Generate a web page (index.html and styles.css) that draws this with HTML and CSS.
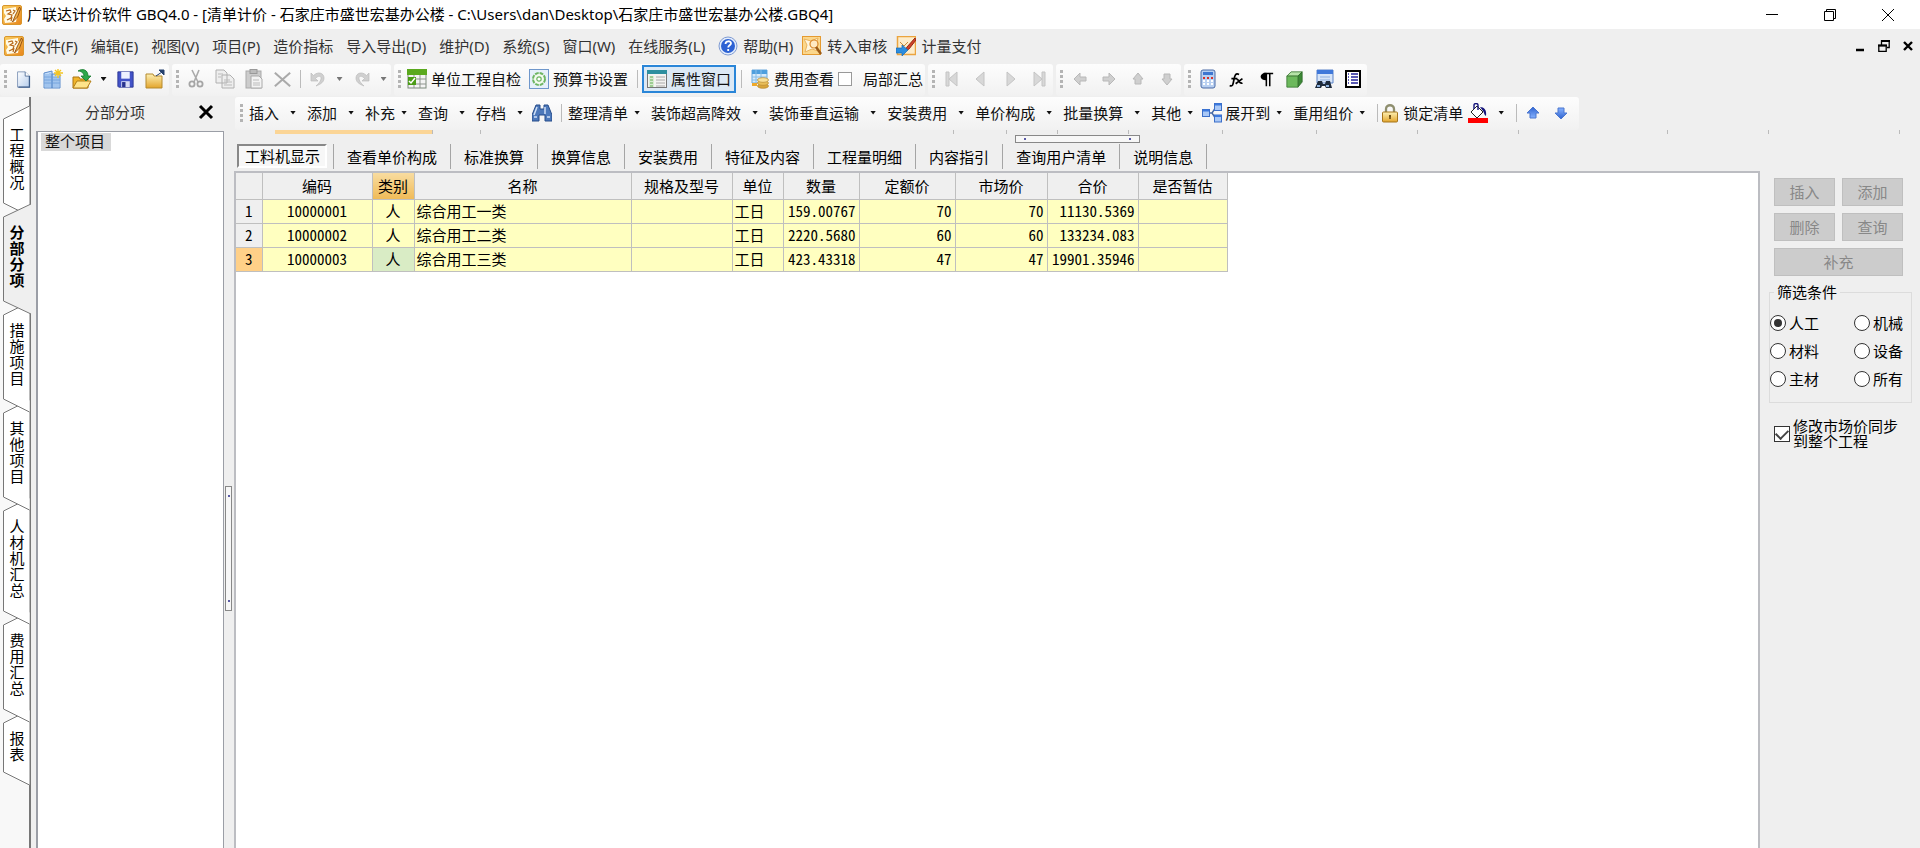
FILE: index.html
```html
<!DOCTYPE html>
<html lang="zh-CN">
<head>
<meta charset="utf-8">
<title>广联达计价软件 GBQ4.0</title>
<link rel="stylesheet" href="styles.css">
</head>
<body>
<svg class="defs" aria-hidden="true">
  <defs>
    <linearGradient id="g-gold" x1="0" y1="0" x2="0" y2="1"><stop offset="0" stop-color="#fdf0b4"/><stop offset="1" stop-color="#e3a52c"/></linearGradient>
    <linearGradient id="g-blue" x1="0" y1="0" x2="0" y2="1"><stop offset="0" stop-color="#2e62cf"/><stop offset="1" stop-color="#86b2ff"/></linearGradient>
    <linearGradient id="g-sky" x1="0" y1="0" x2="1" y2="1"><stop offset="0" stop-color="#fff"/><stop offset="1" stop-color="#b5cdec"/></linearGradient>
    <linearGradient id="g-logo" x1="0" y1="0" x2="1" y2="1"><stop offset="0" stop-color="#fbd060"/><stop offset="1" stop-color="#e8861c"/></linearGradient>
    <symbol id="i-logo" viewBox="0 0 20 20"><rect x=".5" y=".5" width="19" height="19" rx="1.500" fill="url(#g-logo)" stroke="#d9962c"/><path d="M2 4l12-2v3l2 1-2 11-11 1-1-4 2-3-2-3z" fill="#fffbe8"/><path d="M4 6l4-1 1 2-3 2 4 1-1 3-4 2M11 5l2 1-2 3M10 12l-1 4" fill="none" stroke="#b8681a" stroke-width="1.200"/><path d="M17.500 2l-4 8-3 7 5-5 3-8z" fill="#f3b24a" stroke="#8c4a10" stroke-width=".9"/></symbol>
    <symbol id="i-new" viewBox="0 0 20 20"><path d="M3 1h9l5 5v13H3z" fill="url(#g-sky)" stroke="#7a90b4"/><path d="M17 6v13H4" fill="none" stroke="#3f5f8c" stroke-width="1.500"/><path d="M12 1v5h5" fill="#fff" stroke="#4c6a94"/></symbol>
    <symbol id="i-building" viewBox="0 0 20 20"><path d="M1 4l8-2v17H1zM9 5h8v14H9z" fill="#c5defa" stroke="#5b8ccc"/><path d="M3 5v13M5 5v13M7 4v14M11 8v10M13 8v10M15 8v10M1 8h16M1 11h16M1 14h16" stroke="#6d9edb" stroke-width=".8"/><path d="M15 0v9M11 4h9M12 1l6 6M18 1l-6 6" stroke="#f4c624" stroke-width="1.400"/></symbol>
    <symbol id="i-open" viewBox="0 0 20 20"><path d="M1 8h6l1 2h8v9H1z" fill="#f0b429" stroke="#a97514"/><path d="M1 19l4-7h14l-4 7z" fill="#ffe48b" stroke="#b37f16"/><path d="M6 2c5-3 10-1 10 5h3l-5 5-5-5h3c0-3-3-5-6-5z" fill="#2fa84a" stroke="#177a2d" stroke-width=".8"/></symbol>
    <symbol id="i-save" viewBox="0 0 20 20"><path d="M1 1h18v18H2l-1-1z" fill="#4353c8" stroke="#27328f"/><path d="M5 1h10v8H5z" fill="#eef1ff"/><path d="M5 12h10v7H5z" fill="#d8dcf5"/><path d="M6 13h4v6H6z" fill="#27328f"/></symbol>
    <symbol id="i-folder" viewBox="0 0 20 20"><path d="M1 5h7l1 2h8v12H1z" fill="url(#g-gold)" stroke="#b58a2e"/><path d="M11 7l6-4M14 1h5v5z" fill="#24406e" stroke="#24406e"/></symbol>
    <symbol id="i-cut" viewBox="0 0 20 20"><path d="M6 1l6 12M13 1L8 13" stroke="#aaa" stroke-width="1.600"/><circle cx="6" cy="15" r="2.600" fill="none" stroke="#a5a5a5" stroke-width="1.800"/><circle cx="14" cy="15" r="2.600" fill="none" stroke="#a5a5a5" stroke-width="1.800"/></symbol>
    <symbol id="i-copy" viewBox="0 0 20 20"><path d="M1 1h8l3 3v10H1zM7 6h8l4 4v9H7z" fill="#eee" stroke="#b0b0b0"/><path d="M3 5h5M3 8h3M9 11h6M9 13h8M9 16h8" stroke="#bbb"/></symbol>
    <symbol id="i-paste" viewBox="0 0 20 20"><rect x="2" y="2" width="15" height="17" fill="#ccc" stroke="#aaa"/><rect x="6" y=".5" width="7" height="4" fill="#bbb" stroke="#999"/><path d="M7 7h8l3 3v9H7z" fill="#f3f3f3" stroke="#aaa"/><path d="M9 11h6M9 14h7M9 16h7" stroke="#bbb"/></symbol>
    <symbol id="i-x" viewBox="0 0 20 20"><path d="M1 2l18 16M19 2L1 18" stroke="#aaa" stroke-width="2.400"/></symbol>
    <symbol id="i-undo" viewBox="0 0 20 20"><path d="M3 4v8h7L7.500 9.500C10 6 14 7 13 10c-.5 3-3 5-5 7 5-2 8-4 8-8 0-5-6-7-10.500-2.500z" fill="#d0d0d0" stroke="#bbb" stroke-width=".7"/></symbol>
    <symbol id="i-check" viewBox="0 0 20 20"><rect x="1" y="1" width="18" height="18" fill="#f4f4f4" stroke="#7d8a7d"/><path d="M0 0h20v6H0z" fill="#5ba91f"/><path d="M1 10h18M1 15h18M7 6v13M13 6v13" stroke="#8e948e"/><rect x="1" y="8" width="8" height="8" fill="#4b9d16"/><path d="M2 12l2 2 4-5" fill="none" stroke="#fff" stroke-width="1.500"/></symbol>
    <symbol id="i-gear" viewBox="0 0 20 20"><rect x=".5" y=".5" width="19" height="19" fill="#e6f0fa" stroke="#6f97cb"/><circle cx="10" cy="10" r="6" fill="#f3fbef" stroke="#6db562" stroke-width="2" stroke-dasharray="3.700 1"/><circle cx="10" cy="10" r="2.200" fill="#fff" stroke="#6db562" stroke-width="1.200"/></symbol>
    <symbol id="i-prop" viewBox="0 0 20 20"><rect x=".5" y="1.500" width="19" height="17" fill="#f3f3f1" stroke="#777"/><path d="M0 1h20v4H0z" fill="#2d8f9f"/><path d="M2 7h5v11H2z" fill="#d9ecd3"/><path d="M3 8h3M3 11h3M3 14h3M3 17h3" stroke="#63ad53"/><path d="M9 8h9M9 11h9M9 14h9M9 17h9" stroke="#aaa"/></symbol>
    <symbol id="i-fee" viewBox="0 0 20 20"><path d="M2 1h15v13H2z" fill="#d7ebfb" stroke="#6aa9dc"/><path d="M2 1h15v4H2z" fill="#4e9fde"/><path d="M2 8h15M2 11h15M6 1v13M11 1v13" stroke="#86bce6"/><path d="M2 14h5v3H2z" fill="#eea92c"/><g stroke="#b98a30" stroke-width=".7"><ellipse cx="13" cy="17" rx="5.500" ry="2.300" fill="#d9a53a"/><ellipse cx="13" cy="14" rx="5.500" ry="2.300" fill="#e9be58"/><ellipse cx="13" cy="11" rx="5.500" ry="2.300" fill="#f9e098"/></g></symbol>
    <symbol id="i-first" viewBox="0 0 20 20"><path d="M4 3h3v14H4zM15 3v14L7 10z" fill="#d8d8d8" stroke="#c4c4c4"/></symbol>
    <symbol id="i-prev" viewBox="0 0 20 20"><path d="M13 3v14l-8-7z" fill="#d8d8d8" stroke="#c4c4c4"/></symbol>
    <symbol id="i-left" viewBox="0 0 20 20"><path d="M4 10l6-6v4h6v4h-6v4z" fill="#cfcfcf" stroke="#b8b8b8"/></symbol>
    <symbol id="i-up" viewBox="0 0 20 20"><path d="M10 4l5 6h-2v5H7v-5H5z" fill="#cfcfcf" stroke="#b8b8b8"/></symbol>
    <symbol id="i-calc" viewBox="0 0 20 20"><rect x="3" y="1" width="14" height="18" rx="2" fill="#b9d0f1" stroke="#4a6ba6"/><path d="M5 3h10v3H5z" fill="#3f76d0"/><path d="M5 9h2M9 9h2M13 9h2" stroke="#d8302a" stroke-width="2"/><path d="M5 12h2M9 12h2M13 12h2M5 15h2M9 15h2M13 15h2" stroke="#fff" stroke-width="2"/></symbol>
    <symbol id="i-fx" viewBox="0 0 20 20"><path d="M2 17c4 2 4-2 5-7s2-8 6-6M4 9h7M10 10c3-1 3 6 7 4M17 9l-8 6" fill="none" stroke="#000" stroke-width="2"/></symbol>
    <symbol id="i-para" viewBox="0 0 20 20"><path d="M8 3h11M11 3v15M15 3v15" stroke="#000" stroke-width="1.800"/><path d="M11 2C2 2 2 11 11 11z"/></symbol>
    <symbol id="i-cube" viewBox="0 0 20 20"><path d="M1 6l5-5h13l-5 5z" fill="#b6e3a8" stroke="#3b7a34"/><path d="M14 6l5-5v12l-5 6z" fill="#3c8936" stroke="#2f6a2a"/><path d="M1 6h13v13H1z" fill="#6cb95c" stroke="#3b7a34"/></symbol>
    <symbol id="i-find" viewBox="0 0 20 20"><path d="M3 1h16v13H3z" fill="#d6e4f8" stroke="#5a83c8"/><path d="M3 1h16v4H3z" fill="#3f78da"/><path d="M6 8h10M6 11h10" stroke="#8fafdf"/><path d="M1 19l3-7h4l1 3h2l1-3h4l2 7h-6l-1-2h-3l-1 2z" fill="#1d2a3c"/><path d="M3 17h3M12 17h3" stroke="#8fb3e0" stroke-width="2"/></symbol>
    <symbol id="i-list" viewBox="0 0 20 20"><rect x="3" y="2" width="14" height="16" fill="#fff" stroke="#000" stroke-width="2"/><path d="M5 5h1M5 8h1M5 11h1M5 14h1M8 5h7M8 8h7M8 11h7M8 14h7" stroke="#23239a" stroke-width="1.600"/></symbol>
    <symbol id="i-bino" viewBox="0 0 20 20"><path d="M4 2h4v4h4V2h4l4 10v6h-7v-6H7v6H0v-6z" fill="#4d79bb" stroke="#274d8a"/><path d="M5 4l-3 8M13 4v7M2 14h3M15 14h3" stroke="#cfe0f7" stroke-width="1.500"/></symbol>
    <symbol id="i-tree" viewBox="0 0 20 20"><path d="M6 10h4l4-6M10 10l4 6" fill="none" stroke="#4769a5" stroke-width="1.400"/><g fill="#a9c8f6" stroke="#3b6fc9"><rect x=".5" y="6.500" width="7" height="7"/><rect x="12.500" y=".5" width="7" height="7"/><rect x="12.500" y="12" width="7" height="7"/></g><path d="M1 7.500h6M13 1.500h6M13 13h6" stroke="#3b78de" stroke-width="2"/></symbol>
    <symbol id="i-lock" viewBox="0 0 20 20"><path d="M6 10V6c0-5 8-5 8 0v4" fill="none" stroke="#8f8f6f" stroke-width="2.300"/><rect x="2.500" y="9" width="15" height="10" rx="1" fill="url(#g-gold)" stroke="#a5741b"/><path d="M10 12v4M9 13h2" stroke="#6b4a10" stroke-width="1.600"/></symbol>
    <symbol id="i-fill" viewBox="0 0 20 20"><path d="M0 15h20v5H0z" fill="#f00"/><path d="M3 9l6-6 6 6-6 6z" fill="#fff" stroke="#222"/><path d="M6 6V2c0-2 4-2 4 0v5" fill="none" stroke="#16167c" stroke-width="1.400"/><path d="M12 4c4 0 7 3 6 9-2-1-2-4-3-5z" fill="#16167c"/></symbol>
    <symbol id="i-bup" viewBox="0 0 20 20"><path d="M10 4l6 6h-3v5H7v-5H4z" fill="url(#g-blue)" stroke="#4a76cf"/></symbol>
    <symbol id="i-help" viewBox="0 0 20 20"><circle cx="10" cy="10" r="9" fill="#e4edfb" stroke="#7f9bd3"/><circle cx="10" cy="10" r="7" fill="#2d62d4"/><path d="M7.500 8c0-3.500 5.500-3.500 5.500-.8 0 2-2.800 2-2.800 4.300M10.200 13v2" fill="none" stroke="#fff" stroke-width="1.800"/></symbol>
    <symbol id="i-audit" viewBox="0 0 20 20"><rect x=".5" y=".5" width="18" height="18" fill="#fbd78c" stroke="#e59a2f"/><path d="M2 3l7 2 7-3-2 7 2 6-6-2-7 3 2-7z" fill="#fff6de" stroke="#eab35e"/><circle cx="12" cy="8" r="4" fill="#ffe9c2" stroke="#d98728" stroke-width="1.200"/><path d="M14 11l5 7" stroke="#9c5b16" stroke-width="2.500"/></symbol>
    <symbol id="i-pay" viewBox="0 0 20 20"><rect x="1.500" y=".5" width="18" height="18" fill="#fdeccb" stroke="#eba43f" stroke-width="1.500"/><path d="M4 6l4 4 4-4" fill="none" stroke="#c98b3a"/><path d="M19 2l-8 9-2 4 4-2 7-9z" fill="#d0432b" stroke="#962713"/><path d="M0 12h6V9l6 5-6 6v-3H0z" fill="#2b8de0" stroke="#176ab2" stroke-width=".7"/></symbol>
  </defs>
</svg>

<header class="titlebar">
  <svg class="icon"><use href="#i-logo"/></svg>
  <h1 class="title">广联达计价软件 GBQ4.0 - [清单计价 - 石家庄市盛世宏基办公楼 - C:\Users\dan\Desktop\石家庄市盛世宏基办公楼.GBQ4]</h1>
  <div class="winbtns">
    <button class="winbtn" aria-label="最小化"><svg width="12" height="12"><path d="M0 5.500h12" stroke="#000"/></svg></button>
    <button class="winbtn" aria-label="还原"><svg width="12" height="12"><path d="M.5 2.500h9v9h-9zM2.500 2V.500h9v9H10" fill="none" stroke="#000"/></svg></button>
    <button class="winbtn" aria-label="关闭"><svg width="12" height="12"><path d="M0 0l12 12M12 0L0 12" stroke="#000"/></svg></button>
  </div>
</header>

<nav class="menubar">
  <svg class="icon"><use href="#i-logo"/></svg>
  <div class="menus">
    <button class="menu">文件(F)</button><button class="menu">编辑(E)</button><button class="menu">视图(V)</button><button class="menu">项目(P)</button><button class="menu">造价指标</button><button class="menu">导入导出(D)</button><button class="menu">维护(D)</button><button class="menu">系统(S)</button><button class="menu">窗口(W)</button><button class="menu">在线服务(L)</button>
    <div class="menus-icon">
      <button class="menu"><svg class="icon"><use href="#i-help"/></svg>帮助(H)</button><button class="menu"><svg class="icon"><use href="#i-audit"/></svg>转入审核</button><button class="menu"><svg class="icon"><use href="#i-pay"/></svg>计量支付</button>
    </div>
  </div>
  <div class="mdibtns">
    <button class="mdibtn" aria-label="最小化文档"><svg width="12" height="12"><path d="M2 10h8" stroke="#000" stroke-width="2.500"/></svg></button>
    <button class="mdibtn" aria-label="还原文档"><svg width="12" height="12"><path d="M.8 5.500h7.400v6H.8zM3.500 5V1h7.700v6.500H9" fill="none" stroke="#000" stroke-width="1.300"/><path d="M0 5.500h9M3 1h9" stroke="#000" stroke-width="2"/></svg></button>
    <button class="mdibtn" aria-label="关闭文档"><svg width="12" height="12"><path d="M2 2l8 8M10 2l-8 8" stroke="#000" stroke-width="2.400"/></svg></button>
  </div>
</nav>

<div class="toolrow">
  <div class="toolbar">
    <i class="grip"></i>
    <button class="tool" aria-label="新建"><svg class="icon small"><use href="#i-new"/></svg></button>
    <button class="tool" aria-label="新建工程"><svg class="icon"><use href="#i-building"/></svg></button>
    <button class="tool" aria-label="打开"><svg class="icon"><use href="#i-open"/></svg></button>
    <button class="drop" aria-label="打开选项"><i class="caret"></i></button>
    <button class="tool" aria-label="保存"><svg class="icon small"><use href="#i-save"/></svg></button>
    <button class="tool" aria-label="文件夹"><svg class="icon"><use href="#i-folder"/></svg></button>
  </div>
  <div class="toolbar">
    <i class="grip"></i>
    <button class="tool" aria-label="剪切" disabled><svg class="icon"><use href="#i-cut"/></svg></button>
    <button class="tool" aria-label="复制" disabled><svg class="icon"><use href="#i-copy"/></svg></button>
    <button class="tool" aria-label="粘贴" disabled><svg class="icon"><use href="#i-paste"/></svg></button>
    <button class="tool" aria-label="删除" disabled><svg class="icon small"><use href="#i-x"/></svg></button>
    <i class="sep"></i>
    <button class="tool" aria-label="撤销" disabled><svg class="icon"><use href="#i-undo"/></svg></button>
    <button class="drop" aria-label="撤销列表" disabled><i class="caret grey"></i></button>
    <button class="tool" aria-label="重做" disabled><svg class="icon flip"><use href="#i-undo"/></svg></button>
    <button class="drop" aria-label="重做列表" disabled><i class="caret grey"></i></button>
  </div>
  <div class="toolbar">
    <i class="grip"></i>
    <button class="tool text"><svg class="icon"><use href="#i-check"/></svg>单位工程自检</button>
    <button class="tool text"><svg class="icon"><use href="#i-gear"/></svg>预算书设置</button>
    <i class="sep wide"></i>
    <button class="tool text on"><svg class="icon"><use href="#i-prop"/></svg>属性窗口</button>
    <i class="sep wide"></i>
    <button class="tool text"><svg class="icon"><use href="#i-fee"/></svg>费用查看</button>
    <label class="toolcheck"><input type="checkbox" class="box">局部汇总</label>
  </div>
  <div class="toolbar">
    <i class="grip"></i>
    <button class="tool" aria-label="首条" disabled><svg class="icon"><use href="#i-first"/></svg></button>
    <button class="tool" aria-label="上一条" disabled><svg class="icon"><use href="#i-prev"/></svg></button>
    <button class="tool" aria-label="下一条" disabled><svg class="icon flip"><use href="#i-prev"/></svg></button>
    <button class="tool" aria-label="末条" disabled><svg class="icon flip"><use href="#i-first"/></svg></button>
  </div>
  <div class="toolbar">
    <i class="grip"></i>
    <button class="tool" aria-label="升级" disabled><svg class="icon"><use href="#i-left"/></svg></button>
    <button class="tool" aria-label="降级" disabled><svg class="icon flip"><use href="#i-left"/></svg></button>
    <button class="tool" aria-label="上移" disabled><svg class="icon"><use href="#i-up"/></svg></button>
    <button class="tool" aria-label="下移" disabled><svg class="icon flop"><use href="#i-up"/></svg></button>
  </div>
  <div class="toolbar">
    <i class="grip"></i>
    <button class="tool" aria-label="计算器"><svg class="icon"><use href="#i-calc"/></svg></button>
    <button class="tool" aria-label="函数"><svg class="icon small"><use href="#i-fx"/></svg></button>
    <button class="tool" aria-label="特殊符号"><svg class="icon small"><use href="#i-para"/></svg></button>
    <button class="tool" aria-label="图形"><svg class="icon small"><use href="#i-cube"/></svg></button>
    <button class="tool" aria-label="查找"><svg class="icon"><use href="#i-find"/></svg></button>
    <button class="tool" aria-label="列表"><svg class="icon"><use href="#i-list"/></svg></button>
  </div>
</div>

<main class="main">
  <nav class="sidetabs">
    <button class="sidetab"><svg class="outline"><path d="M29.500-6L3.500 7V91L29.500 104"/></svg><span>工程概况</span></button>
    <button class="sidetab active"><svg class="outline"><path d="M31-6L3.500 7V91L31 104"/></svg><span>分部分项</span></button>
    <button class="sidetab"><svg class="outline"><path d="M29.500-6L3.500 7V91L29.500 104"/></svg><span>措施项目</span></button>
    <button class="sidetab"><svg class="outline"><path d="M29.500-6L3.500 7V91L29.500 104"/></svg><span>其他项目</span></button>
    <button class="sidetab"><svg class="outline"><path d="M29.500-6L3.500 7V107L29.500 120"/></svg><span>人材机汇总</span></button>
    <button class="sidetab"><svg class="outline"><path d="M29.500-6L3.500 7V91L29.500 104"/></svg><span>费用汇总</span></button>
    <button class="sidetab"><svg class="outline"><path d="M29.500-6L3.500 7V56L29.500 69"/></svg><span>报表</span></button>
  </nav>

  <aside class="project">
    <div class="project-head">
      <h2 class="project-title">分部分项</h2>
      <button class="project-close" aria-label="关闭面板"><svg width="16" height="16"><path d="M2 2l12 12M14 2L2 14" stroke="#000" stroke-width="3"/></svg></button>
    </div>
    <ul class="tree"><li class="node">整个项目</li></ul>
  </aside>

  <div class="vsplit"><i class="vhandle"></i></div>

  <section class="work">
    <div class="toolbar sub">
      <i class="grip"></i>
      <button class="cmd loose">插入<i class="caret"></i></button><button class="cmd loose">添加<i class="caret"></i></button><button class="cmd">补充<i class="caret"></i></button><button class="cmd loose">查询<i class="caret"></i></button><button class="cmd loose">存档<i class="caret"></i></button>
      <button class="cmd pic" aria-label="查找"><svg class="icon"><use href="#i-bino"/></svg></button>
      <i class="sep"></i>
      <button class="cmd">整理清单<i class="caret"></i></button><button class="cmd loose">装饰超高降效<i class="caret"></i></button><button class="cmd loose">装饰垂直运输<i class="caret"></i></button><button class="cmd loose">安装费用<i class="caret"></i></button><button class="cmd loose">单价构成<i class="caret"></i></button><button class="cmd loose">批量换算<i class="caret"></i></button><button class="cmd">其他<i class="caret"></i></button>
      <button class="cmd pic"><svg class="icon"><use href="#i-tree"/></svg>展开到<i class="caret"></i></button><button class="cmd">重用组价<i class="caret"></i></button>
      <i class="sep"></i>
      <button class="cmd pic"><svg class="icon"><use href="#i-lock"/></svg>锁定清单</button>
      <button class="cmd" aria-label="填充颜色"><svg class="icon"><use href="#i-fill"/></svg><i class="caret"></i></button>
      <i class="sep"></i>
      <button class="tool" aria-label="上移"><svg class="icon"><use href="#i-bup"/></svg></button>
      <button class="tool" aria-label="下移"><svg class="icon flop"><use href="#i-bup"/></svg></button>
    </div>

    <div class="colstrip">
      <i class="hot" style="width:158px"></i><i style="width:48px"></i><i style="width:285px"></i><i style="width:188px"></i><i style="width:53px"></i><i style="width:51px"></i><i style="width:71px"></i><i style="width:94px"></i><i style="width:94px"></i><i style="width:101px"></i><i style="width:101px"></i><i style="width:149px"></i><i style="width:101px"></i><i style="width:131px"></i>
    </div>
    <div class="hsplit"><i class="hhandle"></i></div>

    <nav class="tabs">
      <button class="tab active">工料机显示</button><button class="tab">查看单价构成</button><button class="tab">标准换算</button><button class="tab">换算信息</button><button class="tab">安装费用</button><button class="tab">特征及内容</button><button class="tab">工程量明细</button><button class="tab">内容指引</button><button class="tab">查询用户清单</button><button class="tab">说明信息</button>
    </nav>

    <div class="content">
      <div class="gridpane">
        <table class="grid">
          <colgroup><col class="c-row"><col class="c-code"><col class="c-kind"><col class="c-name"><col class="c-spec"><col class="c-unit"><col class="c-qty"><col class="c-quota"><col class="c-market"><col class="c-total"><col class="c-est"></colgroup>
          <thead><tr><th></th><th>编码</th><th class="hot">类别</th><th>名称</th><th>规格及型号</th><th>单位</th><th>数量</th><th>定额价</th><th>市场价</th><th>合价</th><th>是否暂估</th></tr></thead>
          <tbody>
            <tr><th>1</th><td class="mid">10000001</td><td class="mid">人</td><td>综合用工一类</td><td></td><td>工日</td><td class="num">159.00767</td><td class="num">70</td><td class="num">70</td><td class="num">11130.5369</td><td></td></tr>
            <tr><th>2</th><td class="mid">10000002</td><td class="mid">人</td><td>综合用工二类</td><td></td><td>工日</td><td class="num">2220.5680</td><td class="num">60</td><td class="num">60</td><td class="num">133234.083</td><td></td></tr>
            <tr><th class="cur">3</th><td class="mid">10000003</td><td class="mid sel">人</td><td>综合用工三类</td><td></td><td>工日</td><td class="num">423.43318</td><td class="num">47</td><td class="num">47</td><td class="num">19901.35946</td><td></td></tr>
          </tbody>
        </table>
      </div>
      <aside class="side">
        <div class="actions">
          <button class="action" disabled>插入</button><button class="action" disabled>添加</button>
          <button class="action" disabled>删除</button><button class="action" disabled>查询</button>
          <button class="action full" disabled>补充</button>
        </div>
        <fieldset class="filter">
          <legend>筛选条件</legend>
          <div class="radios">
            <label><input type="radio" name="kind" class="radio" checked>人工</label><label><input type="radio" name="kind" class="radio">机械</label>
            <label><input type="radio" name="kind" class="radio">材料</label><label><input type="radio" name="kind" class="radio">设备</label>
            <label><input type="radio" name="kind" class="radio">主材</label><label><input type="radio" name="kind" class="radio">所有</label>
          </div>
        </fieldset>
        <label class="sync"><input type="checkbox" class="box dark" checked><span>修改市场价同步<br>到整个工程</span></label>
      </aside>
    </div>
  </section>
</main>
</body>
</html>
```
FILE: styles.css
```css
* { box-sizing: border-box; }

body {
  margin: 0;
  height: 100vh;
  display: flex;
  flex-direction: column;
  overflow: hidden;
  background: #efefef;
  color: #111;
  font: 15px/20px "Noto Sans", "Noto Sans CJK SC", sans-serif;
}

button {
  margin: 0;
  padding: 0;
  border: 0;
  background: none;
  color: inherit;
  font: inherit;
  white-space: nowrap;
}

input { margin: 0; }
i { font-style: normal; }

.defs { position: absolute; width: 0; height: 0; }
.icon { width: 20px; height: 20px; flex: none; display: block; }
.icon.small { width: 17px; height: 17px; }
.flip { transform: scaleX(-1); }
.flop { transform: scaleY(-1); }

/* title bar */
.titlebar {
  flex: none;
  display: flex;
  align-items: center;
  height: 29px;
  padding: 0 3px 0 2px;
  background: #fff;
}
.title { flex: 1; margin: 0 0 0 5px; padding-bottom: 1px; color: #000; font-size: 15px; font-weight: 400; }
.winbtns, .mdibtns { display: flex; }
.winbtn, .mdibtn { display: grid; place-items: center; }
.winbtn { width: 58px; height: 29px; }
.mdibtn { width: 24px; height: 24px; }

/* menu bar */
.menubar { flex: none; display: flex; align-items: center; height: 35px; padding: 0 0 2px 4px; }
.menus { flex: 1; display: flex; gap: 13px; margin-left: 7px; }
.menus-icon { display: flex; gap: 9px; }
.menu { display: flex; align-items: center; gap: 5px; color: #333; }

/* toolbars */
.toolrow { flex: none; display: flex; gap: 3px; height: 33px; }
.toolbar {
  display: flex;
  align-items: center;
  height: 32px;
  padding: 0 0 2px 4px;
  border-radius: 3px;
  background: linear-gradient(#fdfdfd, #f1f1f1);
}
.grip {
  flex: none;
  width: 3px;
  height: 18px;
  margin-right: 2px;
  background: repeating-linear-gradient(#b4b4b4 0 3px, transparent 3px 5px);
}
.tool { display: grid; place-items: center; width: 29px; height: 28px; }
.tool.text { display: flex; gap: 4px; width: auto; padding: 0 4px; }
.tool.text.on { border: 2px solid #2a86d8; background: #dce9f5; padding: 0 3px; }
.drop { display: grid; place-items: center; width: 15px; height: 28px; }
.caret {
  flex: none;
  width: 6px;
  height: 4px;
  background: #111;
  clip-path: polygon(0 0, 100% 0, 50% 100%);
}
.caret.grey { background: #777; }
.sep { flex: none; width: 6px; height: 18px; background: linear-gradient(#bbb, #bbb) center / 1px 100% no-repeat; }
.sep.wide { width: 10px; }
.toolcheck { display: flex; align-items: center; gap: 11px; margin: 0 2px 0 0; }

.box {
  appearance: none;
  flex: none;
  width: 14px;
  height: 14px;
  border: 1px solid #999;
  background: #fff;
}
.box.dark { width: 16px; height: 16px; border-color: #333; display: grid; place-items: center; }
.box:checked::after {
  content: "";
  width: 10px;
  height: 6px;
  border: solid #444;
  border-width: 0 0 2px 2px;
  transform: translateY(-1px) rotate(-45deg);
}

.toolbar.sub { align-self: flex-start; height: 33px; padding: 0 4px 2px 5px; margin-left: 1px; }
.cmd { display: flex; align-items: center; padding: 0 3px 0 4px; }
.cmd .icon { margin-right: 4px; }
.cmd .caret { margin: 0 6px; }
.cmd.loose .caret { margin: 0 6px 0 11px; }
.cmd + .cmd { padding-left: 2px; }
.cmd.pic { padding-left: 0; }
.cmd.pic .icon { margin-right: 3px; }
.sub .tool { width: 28px; }

/* vertical page tabs */
.main { flex: 1; display: flex; min-height: 0; }
.sidetabs {
  flex: none;
  display: flex;
  flex-direction: column;
  width: 31px;
  padding-top: 15px;
  border-right: 2px solid #777;
  background: #f8f8f8;
}
.sidetab {
  position: relative;
  display: block;
  width: 31px;
  padding: 14px 0 20px;
  color: #000;
  line-height: 16px;
}
.sidetab span { position: relative; display: block; width: 16px; margin-left: 9px; white-space: normal; word-break: break-all; }
.sidetab:nth-child(1) { z-index: 7; }
.sidetab:nth-child(2) { z-index: 9; }
.sidetab:nth-child(3) { z-index: 6; }
.sidetab:nth-child(4) { z-index: 5; }
.sidetab:nth-child(5) { z-index: 4; }
.sidetab:nth-child(6) { z-index: 3; }
.sidetab:nth-child(7) { z-index: 2; }
.sidetab.active { font-weight: 700; }
.outline { position: absolute; inset: 0; width: 31px; height: 100%; overflow: visible; fill: #fff; stroke: #777; }
.active .outline { fill: #efefef; }

/* project panel */
.project { flex: none; display: flex; flex-direction: column; width: 193px; padding-left: 5px; }
.project-head { display: flex; align-items: center; height: 34px; padding: 0 10px 4px 0; }
.project-title { flex: 1; margin: 0; padding-right: 4px; color: #333; font-size: 15px; font-weight: 400; text-align: center; }
.project-close { display: grid; place-items: center; width: 16px; height: 16px; }
.tree { flex: 1; margin: 0; padding: 1px 3px; border: 2px solid #9b9ea6; border-width: 1px 1px 0 2px; background: #fff; list-style: none; }
.node { width: 70px; height: 18px; padding-left: 4px; background: #d9d9d9; line-height: 16px; white-space: nowrap; }

/* splitters */
.vsplit { flex: none; width: 10px; padding: 389px 2px 0 1px; }
.vhandle, .hhandle { display: flex; align-items: center; justify-content: space-between; border: 1px solid #888; background: #f7f7f7; }
.vhandle { flex-direction: column; height: 125px; padding: 8px 0; }
.hhandle { width: 125px; height: 8px; margin: 0 auto; padding: 0 8px; }
.vhandle::before, .vhandle::after, .hhandle::before, .hhandle::after { content: ""; width: 2px; height: 2px; background: #5a5aa5; }

/* work area */
.work { flex: 1; display: flex; flex-direction: column; min-width: 0; }
.colstrip { flex: none; display: flex; height: 4px; padding-left: 41px; }
.colstrip i { flex: none; border-right: 1px solid #bbb; }
.colstrip .hot { background: #fbd596; }
.hsplit { flex: none; height: 10px; padding-top: 1px; }
.tabs { flex: none; display: flex; height: 27px; padding: 0 0 2px 3px; color: #000; }
.tab { height: 25px; padding: 0 13px; border-right: 1px solid #a5a5a5; }
.tab.active {
  height: 24px;
  padding: 0 5px 0 6px;
  margin-right: 6px;
  border: 2px solid;
  border-color: #888 #fff #fff #888;
  background: #f7f7f7;
}
.tab.active + .tab { border-left: 1px solid #a5a5a5; }

.content { flex: 1; display: flex; min-height: 0; }
.gridpane { flex: 1; min-width: 0; overflow: hidden; border: 2px solid #bcbdc2; border-bottom: 0; background: #fff; }
.grid { table-layout: fixed; width: 991px; border-collapse: collapse; color: #000; font-family: "Noto Sans CJK SC", sans-serif; font-feature-settings: "hwid"; }
.grid th, .grid td { height: 24px; padding: 0 2px; border: 1px solid #bfbfbf; font-weight: 400; white-space: nowrap; overflow: hidden; }
.grid th { background: #efefef; }
.grid td { background: #ffffc0; text-align: left; }
.grid thead th { height: 26px; border-top: 0; }
.grid tr > :first-child { border-left: 0; }
.grid thead .hot { background: linear-gradient(#f8dca0, #f0bb58); }
.grid .mid { text-align: center; }
.grid .num { padding-right: 3px; text-align: right; }
.grid .cur { background: #ffd088; }
.grid .sel { background: #d9ecc5; }
.c-row { width: 26px; }
.c-code { width: 110px; }
.c-kind { width: 42px; }
.c-name { width: 217px; }
.c-spec { width: 101px; }
.c-unit { width: 51px; }
.c-qty { width: 76px; }
.c-quota { width: 96px; }
.c-market { width: 92px; }
.c-total { width: 91px; }
.c-est { width: 89px; }

/* filter side panel */
.side { flex: none; width: 160px; padding: 7px 8px 0 9px; color: #000; }
.actions { display: grid; grid-template-columns: 61px 61px; gap: 7px; padding-left: 5px; }
.action { height: 28px; border: 1px solid #bfbfbf; background: #ccc; color: #888; }
.action.full { grid-column: span 2; }
.filter { margin: 8px 0 0; padding: 9px 0; border: 1px solid #dcdcdc; min-width: 0; }
.filter legend { margin-left: 4px; padding: 0 3px; line-height: 16px; }
.radios { display: grid; grid-template-columns: 84px auto; }
.radios label { display: flex; align-items: center; gap: 3px; height: 28px; }
.radio {
  appearance: none;
  flex: none;
  display: grid;
  place-items: center;
  width: 16px;
  height: 16px;
  border: 1px solid #333;
  border-radius: 50%;
  background: #fff;
}
.radio:checked::after { content: ""; width: 8px; height: 8px; border-radius: 50%; background: #333; }
.sync { display: flex; align-items: center; gap: 3px; margin: 16px 0 0 5px; line-height: 15px; white-space: nowrap; }
```
